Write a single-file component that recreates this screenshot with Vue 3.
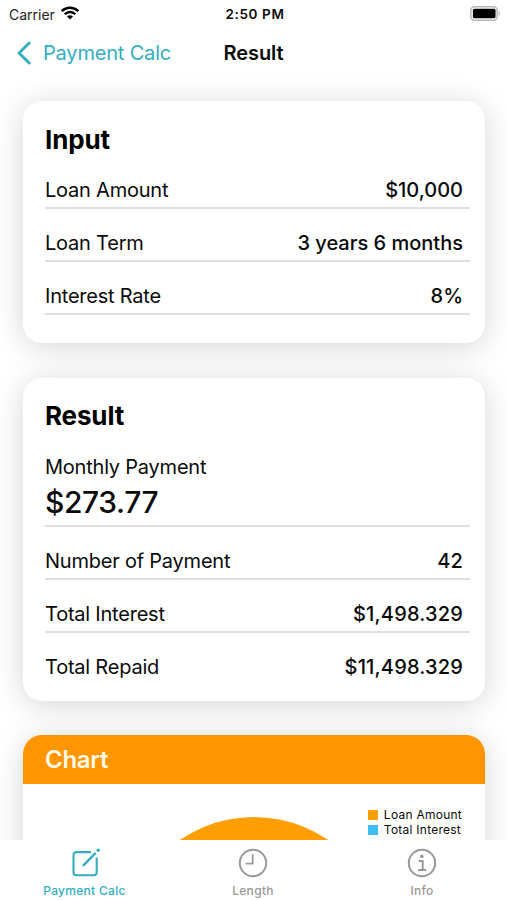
<script setup>
import { ref } from 'vue';

const inputs = ref([
  { label: 'Loan Amount', value: '$10,000' },
  { label: 'Loan Term', value: '3 years 6 months' },
  { label: 'Interest Rate', value: '8%' },
]);

const results = ref([
  { label: 'Number of Payment', value: '42' },
  { label: 'Total Interest', value: '$1,498.329' },
  { label: 'Total Repaid', value: '$11,498.329' },
]);

const activeTab = ref('calc');
</script>

<template>
  <div class="screen">
    <header class="status">
      <div class="carrier">
        <span>Carrier</span>
        <svg class="wifi" width="18" height="14" viewBox="0 0 18 14">
          <path d="M.7 5.2a11.7 11.7 0 0 1 16.6 0" fill="none" stroke="#000" stroke-width="2.6" />
          <path d="M3.7 8.2a7.5 7.5 0 0 1 10.6 0" fill="none" stroke="#000" stroke-width="2.3" />
          <path d="M9 13.6L6 10.6a4.2 4.2 0 0 1 6 0z" fill="#000" />
        </svg>
      </div>
      <span class="time">2:50 PM</span>
      <div class="battery">
        <svg width="31" height="15" viewBox="0 0 31 15">
          <rect x="0.8" y="0.8" width="26.4" height="13.4" rx="3.8" fill="#fff" stroke="#b8b8b8" stroke-width="1.6" />
          <rect x="2.9" y="2.7" width="22.6" height="9.6" rx="1.6" fill="#000" />
          <path d="M28.6 5.2c1.8.6 1.8 4 0 4.6z" fill="#b5b5b5" />
        </svg>
      </div>
    </header>

    <nav class="nav">
      <a class="back">
        <svg width="15" height="24" viewBox="0 0 15 24">
          <path d="M13.2 2L3 12l10.2 10" fill="none" stroke="#35adc1" stroke-width="2.9" stroke-linecap="round" stroke-linejoin="round" />
        </svg>
        <span>Payment Calc</span>
      </a>
      <h1>Result</h1>
      <span></span>
    </nav>

    <main class="content">
      <section class="card input-card">
        <h2>Input</h2>
        <div v-for="row in inputs" :key="row.label" class="row">
          <span class="label">{{ row.label }}</span>
          <span class="value">{{ row.value }}</span>
        </div>
      </section>

      <section class="card result-card">
        <h2>Result</h2>
        <div class="monthly">
          <span class="label">Monthly Payment</span>
          <span class="big">$273.77</span>
        </div>
        <div v-for="row in results" :key="row.label" class="row">
          <span class="label">{{ row.label }}</span>
          <span class="value">{{ row.value }}</span>
        </div>
      </section>

      <section class="card chart-card">
        <h2>Chart</h2>
        <div class="chart">
          <svg class="pie" width="262" height="262" viewBox="0 0 262 262">
            <circle cx="131" cy="131" r="131" fill="#ff9f05" />
          </svg>
          <ul class="legend">
            <li><i class="loan"></i>Loan Amount</li>
            <li><i class="interest"></i>Total Interest</li>
          </ul>
        </div>
      </section>
    </main>

    <footer class="tabs">
      <button :class="{ active: activeTab === 'calc' }" @click="activeTab = 'calc'">
        <svg width="30" height="30" viewBox="0 0 30 30" fill="none" stroke="currentColor">
          <path d="M21 4.1H6.4a2.9 2.9 0 0 0-2.9 2.9v17.3a2.9 2.9 0 0 0 2.9 2.9h17.4a2.9 2.9 0 0 0 2.9-2.9V9.6" stroke-width="2.1" />
          <path d="M13.4 17.4L25.7 4.9" stroke-width="2.4" />
          <path d="M12.2 18.7l.9-2.7 1.8 1.8z" fill="currentColor" stroke="none" />
          <circle cx="28.2" cy="2.3" r="1.7" fill="currentColor" stroke="none" />
        </svg>
        <span>Payment Calc</span>
      </button>
      <button :class="{ active: activeTab === 'length' }" @click="activeTab = 'length'">
        <svg width="30" height="30" viewBox="0 0 30 30" fill="none" stroke="currentColor">
          <circle cx="15" cy="15" r="13.2" stroke-width="2" />
          <path d="M14.7 6.2V15.6H7.6" stroke-width="1.8" />
        </svg>
        <span>Length</span>
      </button>
      <button :class="{ active: activeTab === 'info' }" @click="activeTab = 'info'">
        <svg width="30" height="30" viewBox="0 0 30 30" fill="none" stroke="currentColor">
          <circle cx="15" cy="15" r="13.2" stroke-width="2" />
          <circle cx="14.8" cy="8.4" r="1.8" fill="currentColor" stroke="none" />
          <path d="M11.8 13h3.9v8.9M11.2 22h8" stroke-width="1.9" />
        </svg>
        <span>Info</span>
      </button>
    </footer>
  </div>
</template>

<style>
body {
  margin: 0;
  background: #fff;
}
</style>

<style scoped>
.screen {
  width: 507px;
  height: 900px;
  display: flex;
  flex-direction: column;
  overflow: hidden;
  background: #fff;
  color: #0a0a0a;
  font-family: Inter, "Liberation Sans", sans-serif;
}

.status {
  height: 28px;
  flex: none;
  display: grid;
  grid-template-columns: 1fr auto 1fr;
  align-items: center;
  padding: 0 6px 0 9px;
  box-sizing: border-box;
  font-size: 14px;
}

.carrier {
  display: flex;
  align-items: center;
  gap: 6px;
  color: #222;
  letter-spacing: 0;
}

.wifi {
  margin-top: -3px;
}

.time {
  font-weight: 600;
  font-size: 13.5px;
  letter-spacing: 0.6px;
}

.battery {
  display: flex;
  justify-content: flex-end;
  margin-top: -2px;
}

.nav {
  height: 49px;
  flex: none;
  display: grid;
  grid-template-columns: 1fr auto 1fr;
  align-items: center;
  padding: 0 16px;
}

.back {
  display: flex;
  align-items: center;
  gap: 12px;
  color: #35adc1;
  font-size: 20px;
  letter-spacing: -0.18px;
}

h1 {
  margin: 0;
  font-size: 20px;
  font-weight: 600;
  letter-spacing: -0.1px;
}

.content {
  flex: 1;
  min-height: 0;
  overflow: hidden;
  display: flex;
  flex-direction: column;
  padding: 24px 22px 0 23px;
}

.card {
  flex: none;
  border-radius: 19px;
  background: #fff;
  box-shadow: 0 4px 30px rgba(0, 0, 0, 0.17);
}

.input-card {
  padding: 0 15px 28px 22px;
  margin-bottom: 35px;
}

.result-card {
  padding: 0 15px 15px 22px;
  margin-bottom: 34px;
}

h2 {
  margin: 0;
  height: 55px;
  padding-top: 22px;
  box-sizing: border-box;
  line-height: 34px;
  font-size: 26px;
  font-weight: 700;
  letter-spacing: -0.15px;
  color: #000;
}

.result-card h2 {
  padding-top: 21px;
}

.row {
  height: 53px;
  box-sizing: border-box;
  display: flex;
  justify-content: space-between;
  align-items: flex-end;
  padding: 0 7px 5px 0;
  border-bottom: 2px solid #dfdfdf;
  font-size: 20px;
  line-height: 24px;
}

.result-card .row:last-child {
  border-bottom-color: transparent;
}

.label {
  font-size: 20px;
  line-height: 24px;
  letter-spacing: -0.22px;
}

.value {
  font-weight: 500;
  letter-spacing: 0;
}

.result-card .value {
  letter-spacing: 0.18px;
}

.monthly {
  height: 94px;
  box-sizing: border-box;
  display: flex;
  flex-direction: column;
  justify-content: flex-end;
  padding-bottom: 5px;
  border-bottom: 2px solid #dfdfdf;
}

.big {
  margin-top: 5px;
  font-size: 30px;
  line-height: 36px;
  font-weight: 500;
  letter-spacing: -0.4px;
}

.chart-card {
  height: 420px;
  overflow: hidden;
}

.chart-card h2 {
  height: 49px;
  padding: 8px 22px 0;
  background: #ff9500;
  color: #fffbe8;
  font-size: 24px;
  font-weight: 600;
  letter-spacing: -0.3px;
}

.chart {
  position: relative;
  display: flex;
  justify-content: center;
  padding-top: 33px;
}

.legend {
  position: absolute;
  top: 24px;
  right: 23px;
  margin: 0;
  padding: 0;
  list-style: none;
  font-size: 12px;
  line-height: 14.5px;
  letter-spacing: 0.25px;
}

.legend li {
  display: flex;
  align-items: center;
  gap: 6px;
}

.legend i {
  width: 10px;
  height: 10px;
}

.loan {
  background: #ff9f05;
}

.interest {
  background: #3dbdf5;
}

.tabs {
  height: 60px;
  flex: none;
  display: grid;
  grid-template-columns: repeat(3, 1fr);
  background: #fff;
}

.tabs button {
  display: flex;
  flex-direction: column;
  align-items: center;
  gap: 5px;
  padding: 8px 1px 0 0;
  border: 0;
  background: none;
  color: #999;
  font-family: inherit;
  font-size: 12px;
  font-weight: 500;
  line-height: 15px;
  letter-spacing: 0.3px;
}

.tabs .active {
  padding-right: 0;
  color: #35adc1;
}
</style>
